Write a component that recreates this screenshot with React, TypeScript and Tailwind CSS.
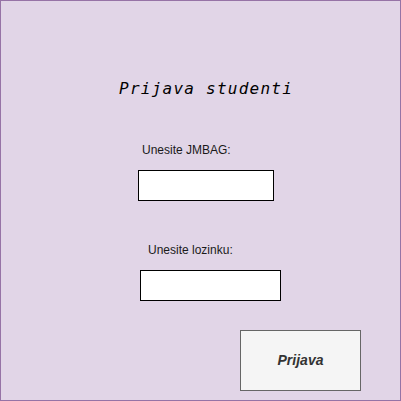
export default function App() {
  return (
    <div className="w-[401px] h-[401px] border border-[#9673a6] bg-[#e1d5e7] flex flex-col relative">
      <div
        className="mt-[76px] ml-[118px] text-[16px] leading-[24px] italic text-black tracking-[1.25px]"
        style={{ fontFamily: '"DejaVu Sans Mono", monospace' }}
      >
        Prijava studenti
      </div>
      <div
        className="mt-[42px] ml-[141px] text-[12px] leading-[14px] text-[#1a1a1a]"
        style={{ fontFamily: '"Liberation Sans", Arial, sans-serif' }}
      >
        Unesite JMBAG:
      </div>
      <div className="mt-[13px] ml-[137px] w-[136px] h-[31px] bg-white border border-black" />
      <div
        className="mt-[42px] ml-[147px] text-[12px] leading-[14px] text-[#1a1a1a]"
        style={{ fontFamily: '"Liberation Sans", Arial, sans-serif' }}
      >
        Unesite lozinku:
      </div>
      <div className="mt-[13px] ml-[139px] w-[141px] h-[31px] bg-white border border-black" />
      <div className="mt-[29px] ml-[239px] w-[121px] h-[61px] bg-[#f5f5f5] border border-[#666666] flex items-center justify-center">
        <span
          className="text-[14px] font-bold italic text-[#333333]"
          style={{ fontFamily: '"Liberation Sans", Arial, sans-serif' }}
        >
          Prijava
        </span>
      </div>
    </div>
  );
}
